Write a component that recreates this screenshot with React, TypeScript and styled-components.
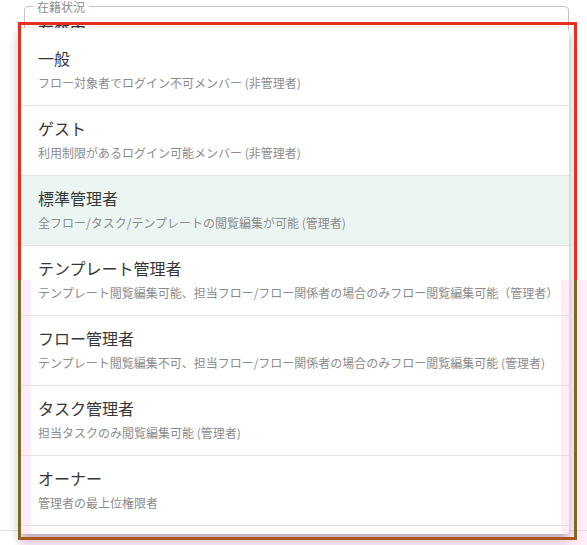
import React from "react";
import styled, { createGlobalStyle } from "styled-components";

const Global = createGlobalStyle`
  html, body { margin: 0; padding: 0; background: #ffffff; }
  body { font-family: "Noto Sans CJK JP", "Noto Sans", Roboto, sans-serif; }
  * { box-sizing: border-box; }
`;

const Page = styled.div`
  position: relative;
  width: 587px;
  height: 545px;
  overflow: hidden;
  background: #ffffff;
  display: flex;
  flex-direction: column;
`;

const Field = styled.fieldset`
  margin: 0 18px 0 24px;
  padding: 0 8px;
  height: 64px;
  border: 1px solid #c4c4c4;
  border-radius: 4px;
  min-width: 0;
`;

const Legend = styled.legend`
  padding: 0 4px;
  font-size: 12px;
  line-height: 13px;
  color: #8c8c8c;
`;

const FieldValue = styled.div`
  margin-top: 5px;
  padding-left: 5px;
  font-size: 16px;
  line-height: 24px;
  color: #333333;
`;

const PageRule = styled.div`
  margin-top: auto;
  margin-bottom: 14px;
  height: 1px;
  background: #e4e4e4;
`;

const Menu = styled.ul`
  position: absolute;
  left: 20px;
  top: 28px;
  width: 549px;
  margin: 0;
  padding: 8px 0;
  list-style: none;
  background: #ffffff;
  border-radius: 4px;
  box-shadow: 0px 5px 5px -3px rgba(0, 0, 0, 0.2),
    0px 8px 10px 1px rgba(0, 0, 0, 0.14), 0px 3px 14px 2px rgba(0, 0, 0, 0.12);
`;

const Item = styled.li<{ $selected?: boolean }>`
  display: flex;
  flex-direction: column;
  gap: 4px;
  padding: 10px 18px 13px 18px;
  border-bottom: 1px solid #e3e3e3;
  background: ${(p) => (p.$selected ? "#ebf6f2" : "#ffffff")};
`;

const Title = styled.div`
  font-size: 16px;
  line-height: 24px;
  color: #363636;
  white-space: nowrap;
`;

const Desc = styled.div`
  font-size: 12px;
  line-height: 18px;
  color: #8c8c8c;
  white-space: nowrap;
`;

const PinkBox = styled.div`
  position: absolute;
  left: 20px;
  top: 280px;
  right: 0;
  bottom: 0;
  border-left: 11px solid rgba(255, 195, 232, 0.28);
  border-right: 26px solid rgba(255, 195, 232, 0.28);
  border-bottom: 11px solid rgba(255, 195, 232, 0.28);
  pointer-events: none;
`;

const Annotation = styled.div`
  position: absolute;
  left: 18px;
  top: 22px;
  width: 559px;
  height: 518px;
  display: flex;
  flex-direction: column;
  pointer-events: none;
`;

const UpperFrame = styled.div`
  flex: 0 0 258px;
  border: 3px solid #e6301d;
  border-bottom: none;
`;

const LowerFrame = styled.div`
  flex: 1;
  border-left: 3px solid #7d6a22;
  border-right: 3px solid #7d6a22;
  border-bottom: 3px solid #b0561c;
`;

const items = [
  { title: "一般", desc: "フロー対象者でログイン不可メンバー (非管理者)" },
  { title: "ゲスト", desc: "利用制限があるログイン可能メンバー (非管理者)" },
  {
    title: "標準管理者",
    desc: "全フロー/タスク/テンプレートの閲覧編集が可能 (管理者)",
    selected: true,
  },
  {
    title: "テンプレート管理者",
    desc: "テンプレート閲覧編集可能、担当フロー/フロー関係者の場合のみフロー閲覧編集可能（管理者）",
  },
  {
    title: "フロー管理者",
    desc: "テンプレート閲覧編集不可、担当フロー/フロー関係者の場合のみフロー閲覧編集可能 (管理者)",
  },
  { title: "タスク管理者", desc: "担当タスクのみ閲覧編集可能 (管理者)" },
  { title: "オーナー", desc: "管理者の最上位権限者" },
];

export default function App() {
  return (
    <>
      <Global />
      <Page>
        <Field>
          <Legend>在籍状況</Legend>
          <FieldValue>在籍中</FieldValue>
        </Field>
        <PageRule />
        <Menu>
          {items.map((it) => (
            <Item key={it.title} $selected={it.selected}>
              <Title>{it.title}</Title>
              <Desc>{it.desc}</Desc>
            </Item>
          ))}
        </Menu>
        <PinkBox />
        <Annotation>
          <UpperFrame />
          <LowerFrame />
        </Annotation>
      </Page>
    </>
  );
}
